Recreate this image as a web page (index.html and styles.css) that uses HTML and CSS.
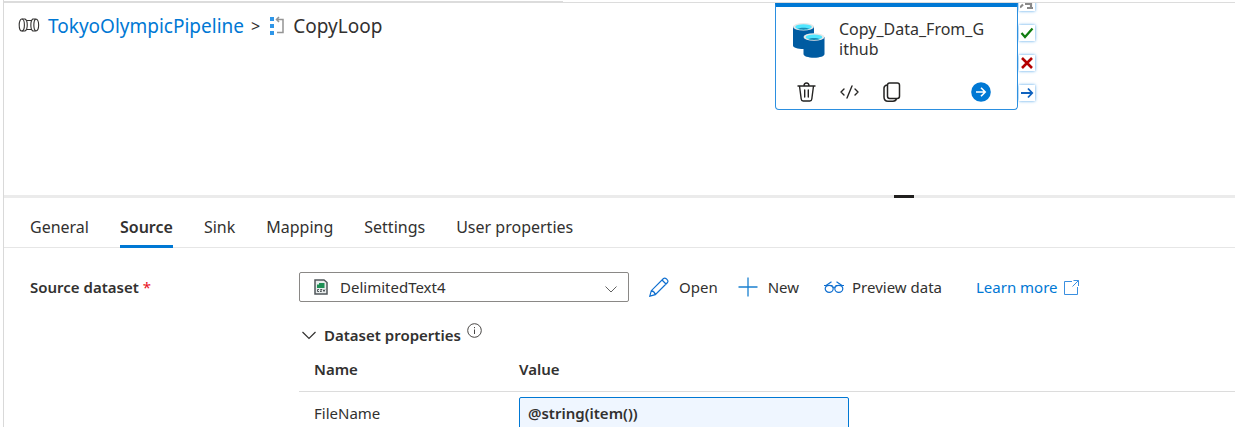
FILE: index.html
```html
<!DOCTYPE html>
<html lang="en">
<head>
<meta charset="utf-8">
<title>CopyLoop - TokyoOlympicPipeline</title>
<link rel="stylesheet" href="styles.css">
</head>
<body>
<div class="workspace">
  <div class="tab-strip"><div class="tab-strip-open"></div></div>
  <section class="canvas">
    <nav class="breadcrumb" aria-label="Breadcrumb">
      <svg class="pipeline-icon" width="22" height="16" viewBox="0 0 22 16" fill="none" stroke="#323130" stroke-width="1.1">
        <ellipse cx="3.800" cy="7" rx="2.600" ry="6"/><path d="M3.800 1h3.200c3 1.400 3 10.600 0 12H3.800M9 2.500h5M9 11.500h5"/><path d="M17.800 1h-3c-2.600 1.600-2.600 10.400 0 12h3M17.800 1c-2.600 1.400-2.600 10.600 0 12 3.800-.6 3.800-11.400 0-12z"/>
      </svg>
      <a class="crumb-link" href="#">TokyoOlympicPipeline</a>
      <span class="crumb-sep">&gt;</span>
      <svg class="loop-icon" width="16" height="20" viewBox="0 0 16 20">
        <path fill="#2f96e8" d="M1 1h4v4H1zM1 8h4v4H1zM1 15h4v4H1z"/><path fill="none" stroke="#949494" stroke-width="1.500" d="M8 16.500h6V3.500H8M10 1L7.500 3.500 10 6"/>
      </svg>
      <span class="crumb-current">CopyLoop</span>
    </nav>
    <article class="node">
      <header class="node-head">
        <svg class="db-icon" width="32" height="36" viewBox="0 0 32 36">
          <path fill="#005ba1" d="M0 3.500v19c0 2 4.500 3.500 10.500 3.500S21 24.500 21 22.500v-19z"/><ellipse cx="10.500" cy="3.800" rx="10.500" ry="3.800" fill="#e8e8e8"/><ellipse cx="10.500" cy="4" rx="8.300" ry="2.700" fill="#50e6ff"/><path fill="#198ab3" d="M4.500 5.800c3-1.500 9-1.500 12 0-3 1.200-9 1.200-12 0z"/>
          <path fill="#005ba1" d="M10.500 14v17c0 2.200 4.500 3.700 10.500 3.700S31.500 33.200 31.500 31V14z"/><ellipse cx="21" cy="14" rx="10.500" ry="3.800" fill="#e8e8e8"/><ellipse cx="21" cy="14.200" rx="8.300" ry="2.700" fill="#50e6ff"/><path fill="#198ab3" d="M15 16c3-1.500 9-1.500 12 0-3 1.200-9 1.200-12 0z"/>
        </svg>
        <h2 class="node-title">Copy_Data_From_Github</h2>
      </header>
      <div class="node-tools">
        <button class="icon-button" aria-label="Delete"><svg width="20" height="20" viewBox="0 0 20 20" fill="none" stroke="#252423" stroke-width="1.400"><path d="M1 4h17M7 4c0-4 5-4 5 0M2.500 4l1.700 13q.2 2 2 2h6.600q1.800 0 2-2L16.500 4M7.700 8v7M11.300 8v7" stroke-linecap="round"/></svg></button>
        <button class="icon-button" aria-label="View code"><svg width="20" height="20" viewBox="0 0 20 20" fill="none" stroke="#252423" stroke-width="1.400" stroke-linecap="round" stroke-linejoin="round"><path d="M4 7L1 10l3 3M15 7l3 3-3 3M12 4L7 16"/></svg></button>
        <button class="icon-button" aria-label="Clone"><svg width="20" height="20" viewBox="0 0 20 20" fill="none" stroke="#252423" stroke-width="1.500"><rect x="4.500" y="1" width="12" height="15.500" rx="2.200"/><path d="M4 3C2 3.500 1 4.500 1 6v9c0 3.200 1.200 4.200 4 4.200h5c2 0 3-.5 3.500-2.700"/></svg></button>
        <button class="icon-button node-run" aria-label="Add output"><svg width="20" height="20" viewBox="0 0 20 20"><circle cx="10" cy="10" r="9.800" fill="#0078d4"/><path fill="none" stroke="#fff" stroke-width="1.600" d="M5 10h9M10 5.800L14.200 10 10 14.200"/></svg></button>
      </div>
    </article>
    <div class="ports">
      <span class="port"><svg width="14" height="14" viewBox="0 0 14 14" fill="none" stroke="#888" stroke-width="2.200"><path d="M0 11.500l3-3M5 8h6v4M7 12h6"/></svg></span>
      <span class="port"><svg width="14" height="14" viewBox="0 0 14 14" fill="none" stroke="#107c10" stroke-width="2.200"><path d="M1.500 7l3.500 4 7.500-8.500"/></svg></span>
      <span class="port"><svg width="14" height="14" viewBox="0 0 14 14" fill="none" stroke="#b40000" stroke-width="2.600"><path d="M2 2l10 10M12 2L2 12"/></svg></span>
      <span class="port"><svg width="14" height="14" viewBox="0 0 14 14" fill="none" stroke="#0f62be" stroke-width="1.800"><path d="M1 7h11M8 2.500L12.200 7 8 11.500"/></svg></span>
    </div>
  </section>
  <div class="splitter"><span class="splitter-grip"></span></div>
  <div class="tabs" role="tablist">
    <button class="tab" role="tab">General</button>
    <button class="tab tab-active" role="tab" aria-selected="true">Source</button>
    <button class="tab" role="tab">Sink</button>
    <button class="tab" role="tab">Mapping</button>
    <button class="tab" role="tab">Settings</button>
    <button class="tab" role="tab">User properties</button>
  </div>
  <section class="form">
    <label class="field-label" for="dataset">Source dataset <span class="required">*</span></label>
    <div class="field-body">
      <div class="dataset-row">
        <div class="select-box">
          <select id="dataset" class="dataset-select"><option>DelimitedText4</option></select>
          <svg class="csv-icon" width="14" height="16" viewBox="0 0 14 16"><path fill="#e8ecec" stroke="#50575b" stroke-width="1.500" d="M1 1h9l3 2.500V15H1z"/><path fill="#1d8f55" d="M3 9V5.500h2V4h5.500v5z"/><path stroke="#50575b" fill="none" d="M5 10.500H3.500v2H5M8 10.500H6.500l1 2H6M9 10.500l1 2 1-2"/></svg>
          <svg class="select-chevron" width="12" height="7" viewBox="0 0 12 7" fill="none" stroke="#616161"><path d="M.5.5L6 6 11.500.5"/></svg>
        </div>
        <button class="action action-open"><svg width="20" height="20" viewBox="0 0 20 20" fill="none" stroke="#0f6fd0" stroke-width="1.200"><path d="M.8 19.200l1.500-5.500L14.500 1.500q1.300-1 2.700.2l1.100 1.100q1.200 1.400.2 2.700L6.300 17.700zM2.300 13.700q3.200.8 4 4M13 3l4 4"/></svg>Open</button>
        <button class="action action-new"><svg width="20" height="20" viewBox="0 0 20 20" fill="none" stroke="#1a80d0" stroke-width="1.300"><path d="M10 .5v19M.5 10h19"/></svg>New</button>
        <button class="action action-preview"><svg width="20" height="12" viewBox="0 0 20 12" fill="none" stroke="#0f6fd0" stroke-width="1.200"><ellipse cx="5.200" cy="7.800" rx="4" ry="3.500"/><ellipse cx="14.800" cy="7.800" rx="4" ry="3.500"/><path d="M9 6.500q1-.8 2 0M0 4.500h8.500M20 4.500h-8.500M2 4.500L7.500.8M18 4.500L12.500.8"/></svg>Preview data</button>
        <a class="learn" href="#">Learn more <svg width="15" height="15" viewBox="0 0 15 15" fill="none" stroke="#3a8fe0"><path d="M8 1.500H.5v13h13V7M9.500.5h5V6M14.500.5l-6 6"/></svg></a>
      </div>
      <div class="group">
        <button class="group-toggle"><svg width="14" height="9" viewBox="0 0 14 9" fill="none" stroke="#323130" stroke-width="1.200"><path d="M.5 1L7 7.500 13.500 1"/></svg>Dataset properties</button>
        <svg class="info-icon" width="15" height="15" viewBox="0 0 15 15" fill="none" stroke="#484644"><circle cx="7.500" cy="7.500" r="6.800"/><path d="M7.500 6.500V11M7.500 4v1.200"/></svg>
      </div>
      <table class="properties">
        <thead><tr><th class="col-name">Name</th><th>Value</th></tr></thead>
        <tbody><tr><td><label for="filename">FileName</label></td><td><input id="filename" class="value-input" type="text" value="@string(item())"></td></tr></tbody>
      </table>
    </div>
  </section>
</div>
</body>
</html>
```
FILE: styles.css
```css
* { box-sizing: border-box; }
body {
  margin: 0;
  height: 100vh;
  overflow: hidden;
  background: #fff;
  color: #323130;
  font: 15px/20px "Segoe UI", "Noto Sans", "Open Sans", sans-serif;
}
button, select, input { font: inherit; color: inherit; }
button { padding: 0; border: 0; background: none; }
a { color: #0078d4; text-decoration: none; }
svg { flex: none; display: block; }
.workspace { min-height: 100vh; margin-left: 3px; border-left: 1px solid #d9d9d9; }
.tab-strip { height: 3px; padding-top: 1px; border-bottom: 1px solid #dcdcdc; }
.tab-strip-open { width: 559px; height: 1px; background: #dcdcdc; }
.canvas { position: relative; height: 192px; overflow: hidden; }
.breadcrumb { display: flex; align-items: center; padding: 10px 14px; font-size: 19px; line-height: 26px; }
.crumb-link { margin-left: 8px; }
.crumb-sep { margin: 0 9px 0 7px; font-size: 16px; }
.loop-icon { margin-right: 8px; }
.node {
  position: absolute;
  left: 771px;
  top: 0;
  width: 243px;
  height: 107px;
  border: 1px solid #2b8fe0;
  border-top: 4px solid #0078d4;
  border-radius: 0 0 4px 4px;
  background: #fff;
}
.node-head { display: flex; gap: 14px; padding: 12px 31px 0 17px; height: 72px; }
.db-icon { margin-top: 4px; }
.node-title { margin: 0; font-size: 16px; line-height: 20px; font-weight: 400; word-break: break-all; }
.node-tools { display: flex; gap: 23px; padding: 3px 26px 0 21px; }
.icon-button { display: block; }
.node-run { margin-left: auto; }
.ports { position: absolute; left: 1015px; top: -8px; display: grid; gap: 14px; }
.port { padding: 1px; background: #fff; box-shadow: 0 0 3px #4aa0e8; }
.splitter { height: 3px; background: #ebebeb; }
.splitter-grip { display: block; width: 20px; height: 3px; margin-left: 890px; background: #201f1e; }
.tabs { display: flex; gap: 31px; height: 50px; padding: 11px 26px 0; border-bottom: 1px solid #e6e6e6; font-size: 16px; }
.tab { height: 39px; padding-bottom: 1px; border-bottom: 3px solid transparent; }
.tab-active { border-color: #0078d4; font-weight: 600; }
.form { display: flex; padding: 24px 0 0 26px; }
.field-label { flex: none; width: 269px; padding-top: 5px; font-weight: 600; }
.required { color: #e81123; font-weight: 400; }
.field-body { flex: 1; }
.dataset-row { display: flex; align-items: center; height: 30px; }
.select-box { position: relative; width: 330px; }
.dataset-select { appearance: none; display: block; width: 100%; height: 30px; padding: 0 40px; border: 1px solid #8a8886; border-radius: 2px; background: #fff; }
.csv-icon { position: absolute; left: 15px; top: 7px; pointer-events: none; }
.select-chevron { position: absolute; right: 12px; top: 14px; pointer-events: none; }
.action { display: flex; align-items: center; gap: 10px; margin-left: 20px; }
.action-preview { gap: 8px; margin-left: 25px; }
.learn { display: flex; align-items: center; gap: 6px; margin-left: 34px; }
.group { display: flex; gap: 6px; padding: 21px 0 0 3px; }
.group-toggle { display: flex; align-items: center; gap: 8px; padding-top: 2px; font-weight: 600; }
.properties { width: 100%; margin-top: 10px; border-collapse: collapse; }
.properties th { height: 36px; padding: 0 0 8px; border-bottom: 1px solid #dcdcdc; text-align: left; font-weight: 600; }
.properties .col-name { width: 220px; padding-left: 15px; }
.properties td { padding: 5px 0 0; }
.properties td:first-child { padding-left: 15px; }
.value-input { display: block; width: 330px; height: 32px; padding: 0 8px; border: 1px solid #0078d4; border-radius: 2px; background: #eff6ff; font-weight: 600; }
```
